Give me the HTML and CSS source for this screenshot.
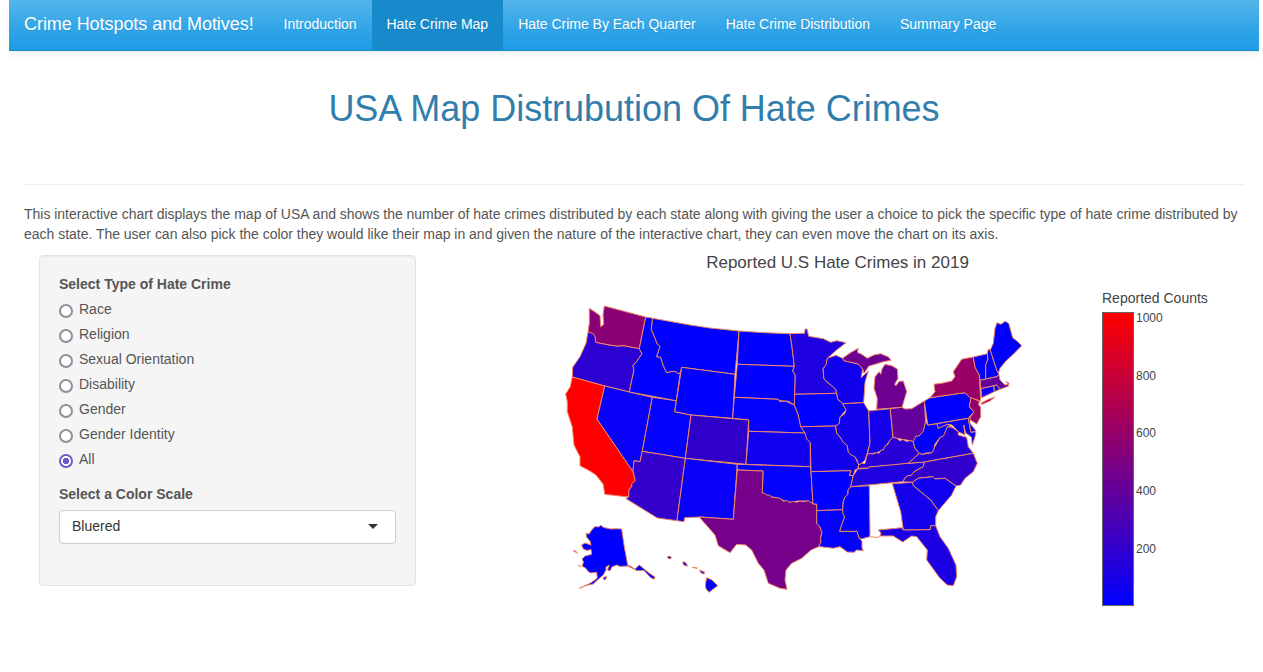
FILE: index.html
```
<!DOCTYPE html>
<html lang="en">
<head>
<meta charset="utf-8">
<title>Crime Hotspots and Motives!</title>
<link rel="stylesheet" href="styles.css">
</head>
<body>
<nav class="navbar">
  <a class="brand">Crime Hotspots and Motives!</a>
  <a class="tab">Introduction</a>
  <a class="tab active">Hate Crime Map</a>
  <a class="tab">Hate Crime By Each Quarter</a>
  <a class="tab">Hate Crime Distribution</a>
  <a class="tab">Summary Page</a>
</nav>
<main class="page">
  <h1 class="title">USA Map Distrubution Of Hate Crimes</h1>
  <hr class="rule">
  <p class="intro">This interactive chart displays the map of USA and shows the number of hate crimes distributed by each state along with giving the user a choice to pick the specific type of hate crime distributed by each state. The user can also pick the color they would like their map in and given the nature of the interactive chart, they can even move the chart on its axis.</p>
  <div class="columns">
    <form class="well">
      <div class="group-label">Select Type of Hate Crime</div>
      <div class="options">
        <label class="option"><span class="radio"></span>Race</label>
        <label class="option"><span class="radio"></span>Religion</label>
        <label class="option"><span class="radio"></span>Sexual Orientation</label>
        <label class="option"><span class="radio"></span>Disability</label>
        <label class="option"><span class="radio"></span>Gender</label>
        <label class="option"><span class="radio"></span>Gender Identity</label>
        <label class="option"><span class="radio checked"></span>All</label>
      </div>
      <div class="group-label">Select a Color Scale</div>
      <div class="select"><span>Bluered</span><span class="caret"></span></div>
    </form>
    <section class="plot">
      <h2 class="plot-title">Reported U.S Hate Crimes in 2019</h2>
      <div class="plot-body">
        <svg class="map" viewBox="560 295 470 310" width="470" height="310">
          <path fill="#8a0075" d="M589.3 308.3L595 312 600 315.7 600.7 326.7 603.7 324.3 603 315 604.3 306 645.7 317 639.3 348.7 623.3 345.7 618 346.3 610 345.2 600 343.3 595.7 342.3 595 336.7 588 332 589.3 323.3Z"/>
          <path fill="#2d00d2" d="M588 332L593 333.5 595 336.7 595.7 342.3 600 343.3 610 345.2 618 346.3 623.3 345.7 639.3 348.7 642 353.7 637 361 633 365.7 634 370 629.3 392 604.7 386 572.3 377 572.7 367.3 580 356.7 586 343.3Z"/>
          <path fill="#f00" d="M572.3 377L604.7 386 597 419 633 471.7 635.3 480.7 629 490 628.7 497 604.7 494.3 603.3 484.3 596 475 590 471 580 465.7 580 456.7 574 445 572.3 426.7 567.3 411.7 567.3 401.7 565.7 394 570.3 386.7Z"/>
          <path fill="#0800f7" d="M604.7 386L629.3 392 652.3 397.3 642.3 451.3 640 461.7 634 460.7 633 471.7 597 419Z"/>
          <path fill="#0300fc" d="M652.3 397.3L676.3 400.7 674.7 411.7 691 415 685.3 458.3 642.3 451.3Z"/>
          <path fill="#3300cc" d="M642.3 451.3L685.3 458.3 677 520.7 657.3 518 626 498.7 628.7 497 629 490 632 486 631.5 484 635.3 480.7 633 471.7 634 460.7 640 461.7Z"/>
          <path fill="#00f" d="M645.7 317L652.7 318.3 651.3 329.3 655 338 657 343.5 660 346.7 656.7 356.7 660.7 357.3 663.3 365.7 666.7 372.7 671 371.5 675 371.3 678 373.5 680.3 372.7 676.3 400.7 629.3 392 634 370 633 365.7 637 361 642 353.7 639.3 348.7Z"/>
          <path fill="#00f" d="M652.7 318.3L690 325 710 328 739 331 735 374.3 681.7 367.3 680.3 372.7 678 373.5 675 371.3 671 371.5 666.7 372.7 663.3 365.7 660.7 357.3 656.7 356.7 660 346.7 657 343.5 655 338 651.3 329.3Z"/>
          <path fill="#00f" d="M681.7 367.3L735 374.3 732.7 418.3 691 415 674.7 411.7Z"/>
          <path fill="#00f" d="M739 331L765 332.7 790 333.7 792 347 794.3 366.3 737.3 364.3Z"/>
          <path fill="#00f" d="M737.3 364.3L794.3 366.3 792.7 371 795.3 375 794.3 405 788.3 401.3 780 400.7 778 399.3 734.3 397.3Z"/>
          <path fill="#0300fc" d="M734.3 397.3L778 399.3 780 401.7 785 401 788.3 402.3 794.3 405 798.3 415 800.7 426 805 433 748.7 431.3 748.7 420 732.7 418.3Z"/>
          <path fill="#3000cb" d="M691 415L748.7 420 746 464.3 685.3 458.3Z"/>
          <path fill="#1000ef" d="M748.7 431.3L805 433 806.7 435 810.3 442.7 810.3 466.7 746 464.3Z"/>
          <path fill="#0800f7" d="M685.3 458.3L737.3 464.3 733.3 519.3 700 517 684.7 517.7 684 521.7 677 520.7Z"/>
          <path fill="#0300fc" d="M737.3 464.3L810.3 466.7 811 471.7 813 504 808.3 501 796.7 501 793.3 502.3 786.7 502 780 498.8 769.3 496.3 762.3 493 763 471 737.3 470Z"/>
          <path fill="#750089" d="M737.3 470L763 471 762.3 493 765 493.5 766.5 495 769.3 495 772 497.3 776 497.5 780 498.3 783 501.2 786.7 500.5 790 502.5 793.3 501.3 796.7 502.3 800 501 804 501.8 808.3 500.6 813 504 816.7 504 816.7 523.3 820 527 822 532.7 820.5 538 821 542 818.7 546.7 811 550 801.7 558.3 791.7 563.3 786 570 785 580 787 589.3 780 588.3 768.3 583.3 764 570 758.3 563.3 751.7 550 745.7 545 736.7 544.3 730 552.7 718.3 545.7 715 535 700 518 700 517 733.3 519.3Z"/>
          <path fill="#1e00e1" d="M790 333.7L804.7 333.3 805 329 807 329 808.7 336.3 823.3 338.7 830.7 342.3 836.7 340.7 846 342.7 836.7 350 827.3 358.3 826.3 364.3 823 369 824 379 835.7 389.3 836.7 393.3 794.7 394.3 795.3 375 792.7 371 794.3 366.3 792 347Z"/>
          <path fill="#00f" d="M794.7 394.3L836.7 393.3 837.7 399 842.7 403.7 846 410 840 417 839.3 423.3 835.7 426 800.7 426.7 798.3 415 794.3 405Z"/>
          <path fill="#1100ee" d="M800.7 426.7L835.7 426 836.7 433.3 847.3 445.7 848.3 451.7 855 456.7 858.7 465 857.7 469 855 470 853.3 475.7 849.3 475.3 851 470.7 811 471.7 810.3 442.7 806.7 439 805 433Z"/>
          <path fill="#00f" d="M811 471.7L851 470.7 849.3 475.3 853.3 475.7 850.7 486.7 848 490 848 494 845 497 843.3 501.7 842.7 509.7 816.7 510.7 816.7 504 813 504Z"/>
          <path fill="#0300fc" d="M816.7 510.7L842.7 509.7 844.7 516.7 839.7 531.3 857 531.3 859.3 538.3 862 541 862 548 863.3 550.7 856.7 550 854 552.3 847.3 552 840 546.7 833.3 548.3 820 546.7 818.7 546.7 821 542 820.5 538 822 532.7 820 527 816.7 523.3Z"/>
          <path fill="#0200fd" d="M850.7 486.7L869.3 485.7 870 534.3 869.7 536.7 861.3 539 859.3 538.3 857 531.3 839.7 531.3 842 524 844.7 516.7 842.7 513 842.7 509.7 843.3 501.7 845 497 848 494 848 490Z"/>
          <path fill="#1100ee" d="M827.3 358.3L836 355.3 842.7 358.3 844 360.7 858.3 364 862.7 369 861.3 377.7 868.3 371 865 382.3 863.7 402.7 842.7 403.7 837.7 399 836.7 393.3 835.7 389.3 824 379 823 369 826.3 364.3Z"/>
          <path fill="#6e0091" d="M842.7 358.3L850 353 858.3 348.3 857.3 352.3 862 354.5 867.3 358.3 874 355 880.7 353.7 886 356 888.5 357 891 360.3 883.3 361.7 875 364.3 869 366 864 373.3 862.7 369 858.3 364 844 360.7ZM885 364.3L891.7 365.7 897.3 369 898 378.3 894.7 384.3 896 385.7 899 381.5 903.3 381 906.7 391.7 902 407.3 876.7 409.3 877.3 398.3 874 388.3 875 376.7 879.3 371.7 880.7 374.3 882 369Z"/>
          <path fill="#1100ee" d="M842.7 403.7L863.7 402.7 868.7 411 870 443.3 866.7 455 865 460 861.7 463.3 858.7 465 857 460 855 456.7 851 455 848.3 451.7 847.3 445.7 843 442 840 437 836.7 433.3 835.7 426 839.3 423.3 840 417 844.5 414 846 410Z"/>
          <path fill="#1400eb" d="M868.7 411L872 410.5 890.3 408.7 893 437.3 888 443 883.3 450 876.7 452.7 867.3 454.3 870 443.3Z"/>
          <path fill="#62009d" d="M890.3 408.7L902 407.3 905 409 911.7 408.7 924.3 401 925.7 421.7 923.3 433.3 913.3 441.7 906.7 440 896.7 438.3 893 437.3Z"/>
          <path fill="#2800d7" d="M858.7 465L861.7 463.3 865 463.5 867.3 454.3 870 453.5 873 454 876.7 452.7 879 453.3 881 450 883.3 450 885 446 888 444 890 440 893 437.3 896.7 438.3 900 440.8 903 439.5 906.7 441.5 910 440.5 913.3 441.7 915 448.3 919.3 453.3 908.3 463.3 890 465.7 869 467 868 468 858.3 468.3Z"/>
          <path fill="#1f00e0" d="M857.7 469L868 468.3 869 467 908.3 463.3 924.3 462 923.3 466.7 918 469.5 914 472 911 475.5 908 475.5 905 478.3 902.7 481.7 850.7 486.7 853.3 475.7Z"/>
          <path fill="#2600d9" d="M908.3 463.3L919.3 453.3 922.3 454.3 931.7 452.7 940 437.3 947.3 426.7 951.7 427 958.3 431.7 958.3 435 966.7 437.3 968.3 446.7 973.3 453.3 924.3 462Z"/>
          <path fill="#00f" d="M925.7 421.7L927.7 425 937 423.7 938.3 428.3 942 426 947.3 424.3 951.7 427 947.3 426.7 943.5 436 940 437.3 935 444 934 449 931.7 452.7 926 453 922.3 454.3 919.3 453.3 915 448.3 913.3 441.7 916 436 919 436 923.3 431.3Z"/>
          <path fill="#00f" d="M924.3 401L930 397.7 965 392.7 971 397.7 969.3 406.7 974 411.7 968.3 418.3 927.7 425Z"/>
          <path fill="#980067" d="M930 397.7L935 391.7 934 384.3 943 383 951.7 381 955 376.7 953.3 371.7 961.7 359.3 973.3 357 975 367 979.3 375 980.7 401 970 397.7 965 392.7ZM980.7 403.3L988 399.5 995 397 990 401 982 404.3Z"/>
          <path fill="#920070" d="M971 397.7L979.3 401 978.7 405 980.7 407 980.7 416.7 976.7 424 969 419 974 411.7 969.3 406.7Z"/>
          <path fill="#0800f7" d="M937 423.7L968.3 418.3 971 432.3 976 431.7 975 437 972.3 445 971.3 437 965.7 433 963.7 425 965 435 958.3 431.7 952 425 947.3 424.3 938.3 428.3Z"/>
          <path fill="#00f" d="M968.3 418.3L970 417.3 970 423.3 976 431 971 432.3Z"/>
          <path fill="#3200cd" d="M924.3 462L973.3 453.3 977.3 463.3 973.3 471.7 965 478.3 960.7 485 956 486 945 478.3 935 479 932.7 476.7 918.3 478.3 912.3 482.3 902.7 481.7 905 478.3 908 475.5 911 475.5 914 472 918 469.5 923.3 466.7Z"/>
          <path fill="#1000ef" d="M912.3 482.3L918.3 478.3 932.7 476.7 935 479 945 478.3 956 486 951.7 495 938.3 510.7 930.7 500 913.3 485.7Z"/>
          <path fill="#1400eb" d="M892.3 483.7L912.3 482.3 913.3 485.7 930.7 500 938.3 510.7 935.7 516.7 935.7 525.7 930.7 525.7 930.3 529.7 903.3 530 900.7 511.7Z"/>
          <path fill="#1c00e3" d="M878.3 530L901.7 527.7 903.3 530 930.3 529.7 930.7 525.7 935.7 525.7 940 536.7 948.3 548.3 956 565 956.7 576.7 953.3 585.7 947.3 585 940 578.3 926.7 560 927.3 550 916.7 536.7 911.7 536 902.7 542 893.3 536 880 536 881 533Z"/>
          <path fill="none" d="M869.7 536.7L873 537 878 537.5 880 536"/>
          <path fill="#0300fc" d="M973.3 357L987.3 353.7 988 359 985.7 365 985.7 379 980 380.3 979.3 375 975 367Z"/>
          <path fill="#0100fe" d="M987.3 353.7L988.3 349.3 990.3 350 996.7 370 999 374.3 996.7 376.7 985.7 379 985.7 365 988 359Z"/>
          <path fill="#00f" d="M990.3 350L993.3 343.3 995 328.3 997 322.7 1001 324.3 1005 321.3 1008.7 323.3 1012.7 337.7 1017 341 1021.7 345.7 1013.3 354.3 1006 361 1000 368.3 998.3 373.3 996.7 370Z"/>
          <path fill="#62009d" d="M980 380.3L996.7 376.7 999 375 1000 380 1005 385 1008.3 384.3 1006 381.3 1009 383.3 1008.3 386.3 1000 389.3 996.7 385 981 388.7Z"/>
          <path fill="#0d00f2" d="M981 388.7L994 385.7 994.3 391.7 981.7 397.7Z"/>
          <path fill="#0300fc" d="M994 385.7L996.7 385 1000 389.3 994.3 391.7Z"/>
          <path fill="#00f" d="M600.7 525L602.7 527 606 528 611 529 616 528.7 621.7 529 624 545 627.7 565 631 566.5 635 569 639.3 565 643.3 568.3 649 573 655 577 654.3 579.3 650.7 577.7 644 570.5 637.3 570.7 627.7 566 620 566.5 616.7 565 612 567 610 571 607.5 570 609.3 565 606 567 606 570 603.3 575 598 579.5 593.3 584 586 585.5 579.3 588.3 590 583.3 595 580 597.3 577.7 596.7 572.3 591 573 588.3 571.7 586 568.5 582 566 583.5 562 582 559 585 556 591.7 554.3 591 549.5 587 550.5 583.3 549 581.5 545 585 543 591 545 590 541 586.5 537 586 533.3 589 534 591.7 530 595 526.5 599 527ZM603 577.5L606.5 576.5 606 579 604 580ZM573 550.5L575.5 551 577.5 553.3ZM578.5 565.5L581 566.5Z"/>
          <path fill="#0300fc" d="M706.7 577.7L712 580 717.7 585.7 709 592.3 706 589 705.3 585ZM667 557L670 556 671.5 558 669 559ZM682.5 562L685 562 688 566 684 565.5ZM692.3 567.4L697.5 568.2ZM699.5 570L704.5 572 704 574 701 573Z"/>
        </svg>
        <aside class="legend">
          <div class="legend-title">Reported Counts</div>
          <div class="legend-body">
            <div class="gradient"></div>
            <div class="ticks"><span>1000</span><span>800</span><span>600</span><span>400</span><span>200</span></div>
          </div>
        </aside>
      </div>
    </section>
  </div>
</main>
</body>
</html>
```
FILE: styles.css
```
* { box-sizing: border-box; }
body {
  margin: 0 4px 0 9px;
  font: 14px/20px "Liberation Sans", Arial, sans-serif;
  color: #555;
  background: #fff;
  height: 672px;
  overflow: hidden;
}
.navbar {
  display: flex;
  height: 51px;
  border-bottom: 1px solid #178acc;
  background: linear-gradient(#54b4eb, #2fa4e7 60%, #1d9ce5);
  box-shadow: 0 1px 10px rgba(0, 0, 0, .1);
  color: #fff;
  text-shadow: 0 1px 0 rgba(0, 0, 0, .1);
}
.brand { padding: 14px 15px; font-size: 18px; letter-spacing: -.055px; }
.tab { padding: 14px 15px; letter-spacing: -.022px; }
.tab.active { background: #178acc; }
.page { padding: 38px 15px 0; }
.title {
  margin: 0;
  font-size: 36px;
  font-weight: 400;
  line-height: 40px;
  letter-spacing: -.03px;
  color: #317eac;
  text-align: center;
}
.rule { margin: 55px 0 19px; border: 0; border-top: 1px solid #eee; }
.intro { margin: 0 -5px 11px 0; letter-spacing: -.018px; }
.columns { display: flex; padding-left: 15px; }
.well {
  width: 377px;
  height: 331px;
  padding: 18px 19px;
  border: 1px solid #e3e3e3;
  border-radius: 4px;
  background: #f5f5f5;
  box-shadow: inset 0 1px 1px rgba(0, 0, 0, .05);
}
.group-label { font-weight: 700; }
.options { display: grid; gap: 5px; margin: 5px 0 15px; }
.option { display: flex; align-items: flex-start; gap: 6px; }
.radio {
  width: 14px;
  height: 14px;
  margin-top: 5px;
  border: 2px solid #8f8f9d;
  border-radius: 50%;
  background: #fff;
}
.radio.checked { border-color: #6f58c9; background: radial-gradient(circle, #6f58c9 0 3px, #fff 3.5px); }
.select {
  display: flex;
  align-items: center;
  justify-content: space-between;
  height: 34px;
  margin-top: 6px;
  padding: 0 17px 2px 12px;
  border: 1px solid #ccc;
  border-radius: 4px;
  background: #fff;
  color: #333;
}
.caret { border: 5px solid transparent; border-top-color: #333; border-bottom: 0; }
.plot { flex: 1; padding-left: 144px; color: #444; }
.plot-title {
  width: 555px;
  margin: -2px 0 0;
  font-size: 17px;
  font-weight: 400;
  line-height: 20px;
  text-align: center;
}
.plot-body { display: flex; gap: 72px; margin-top: 15px; }
.map { display: block; flex: none; margin-top: 7px; }
.map path { stroke: #ee8665; stroke-width: 1; stroke-linejoin: round; }
.legend { flex: none; white-space: nowrap; }
.legend-title { font-size: 14px; }
.legend-body { display: flex; gap: 2px; margin-top: 4px; }
.gradient { width: 32px; height: 294px; border: 1px solid #666; background: linear-gradient(#f00, #00f); }
.ticks { display: flex; flex-direction: column; gap: 43.7px; margin-top: -1px; font-size: 12px; line-height: 14px; }
```
